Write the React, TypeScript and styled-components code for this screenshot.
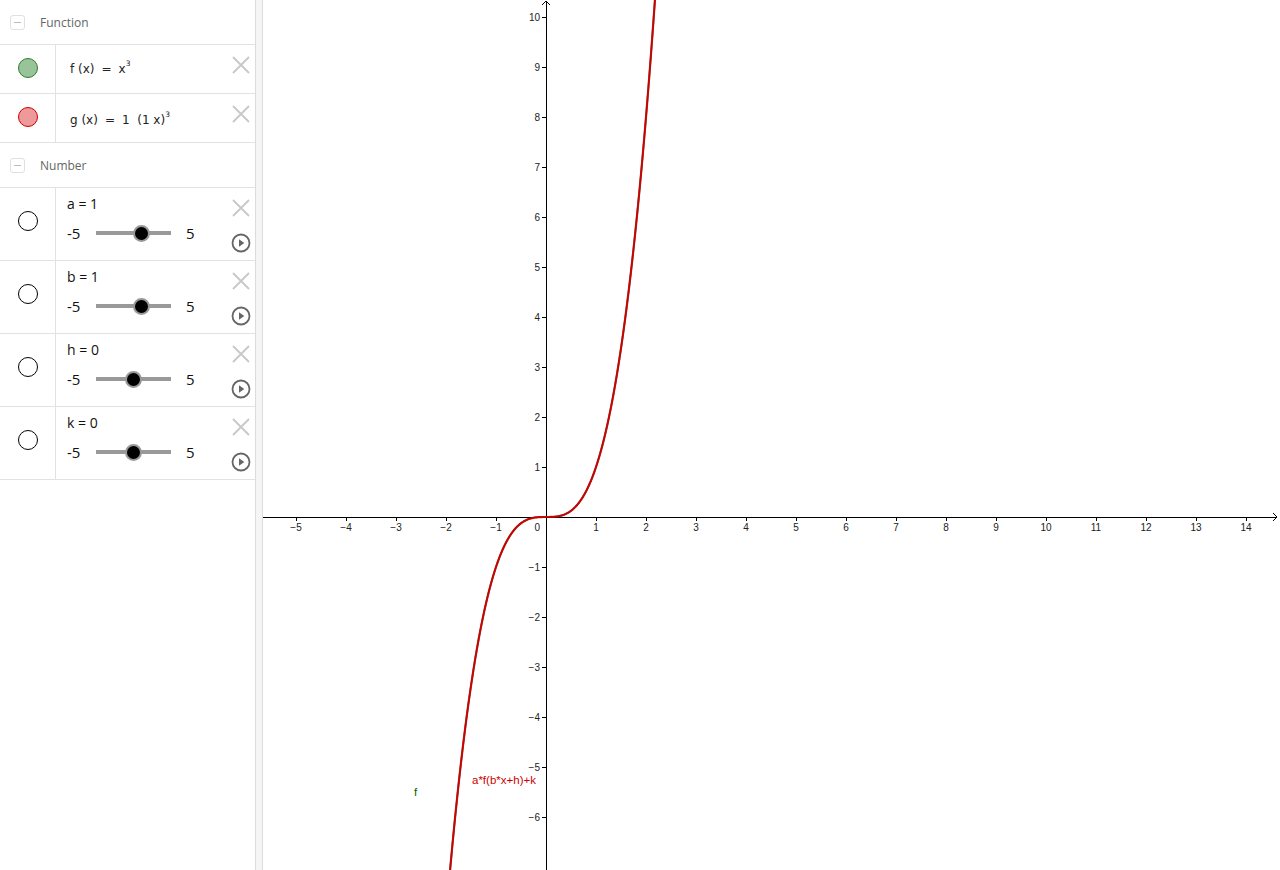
import React from 'react'
import styled, { createGlobalStyle } from 'styled-components'

const GlobalStyle = createGlobalStyle`
  html, body {
    margin: 0;
    padding: 0;
    overflow: hidden;
    background: #fff;
  }
  #root {
    height: 870px;
  }
`

const ORIGIN_X = 283
const ORIGIN_Y = 517
const UNIT = 50
const GRAPH_W = 1017
const GRAPH_H = 870

type Slider = { name: string; value: number }

const sliders: Slider[] = [
  { name: 'a', value: 1 },
  { name: 'b', value: 1 },
  { name: 'h', value: 0 },
  { name: 'k', value: 0 },
]

const Page = styled.div`
  display: flex;
  height: 870px;
  font-family: "Open Sans", "DejaVu Sans", sans-serif;
`

const Sidebar = styled.aside`
  width: 256px;
  flex: none;
  background: #fff;
  border-right: 1px solid #dcdcdc;
  box-sizing: border-box;
`

const Splitter = styled.div`
  width: 6px;
  flex: none;
  background: #f5f5f5;
  border-right: 1px solid #dcdcdc;
`

const GraphArea = styled.main`
  flex: 1;
  overflow: hidden;
`

const SectionHeader = styled.div`
  height: 44px;
  display: flex;
  align-items: center;
  gap: 15px;
  padding-left: 10px;
  border-bottom: 1px solid #e2e2e2;
  color: #666;
  font-size: 12px;
`

const Collapse = styled.span`
  width: 13px;
  height: 13px;
  border: 1px solid #e0e0e0;
  border-radius: 3px;
  display: flex;
  align-items: center;
  justify-content: center;

  &::after {
    content: '';
    width: 7px;
    height: 1px;
    background: #bbb;
  }
`

const Row = styled.div<{ $h: number }>`
  height: ${p => p.$h}px;
  display: flex;
  border-bottom: 1px solid #e2e2e2;
`

const MarkerCell = styled.div<{ $shift?: number }>`
  width: 56px;
  flex: none;
  border-right: 1px solid #e2e2e2;
  display: flex;
  align-items: center;
  justify-content: center;
  padding-bottom: ${p => p.$shift ?? 0}px;
  box-sizing: border-box;
`

const Marker = styled.span<{ $fill: string; $stroke: string }>`
  width: 18px;
  height: 18px;
  border-radius: 50%;
  background: ${p => p.$fill};
  border: 1px solid ${p => p.$stroke};
`

const Content = styled.div`
  flex: 1;
  position: relative;
  padding-left: 11px;
`

const Formula = styled.div<{ $down?: number }>`
  height: 100%;
  display: flex;
  align-items: center;
  padding: ${p => p.$down ?? 0}px 0 0 3px;
  box-sizing: border-box;
  font-family: "DejaVu Sans", sans-serif;
  font-size: 12px;
  color: #222;
  white-space: pre;

  sup {
    font-size: 7.5px;
    position: relative;
    top: -6px;
  }
`

const Op = styled.span`
  margin: 0 7px;
`

const Actions = styled.div`
  position: absolute;
  right: 4px;
  top: 10px;
  display: flex;
  flex-direction: column;
  align-items: center;
  gap: 15px;
`

const SliderLabel = styled.div`
  margin-top: 6px;
  font-size: 14px;
  color: #111;
  height: 19px;
`

const SliderLine = styled.div`
  display: flex;
  align-items: center;
  margin-top: 10px;
  font-size: 15px;
  color: #111;
`

const Bound = styled.span<{ $w: number }>`
  width: ${p => p.$w}px;
`

const Track = styled.div`
  position: relative;
  width: 75px;
  height: 4px;
  background: #999;
  margin-right: 15px;
`

const Knob = styled.span`
  position: absolute;
  top: 50%;
  width: 13px;
  height: 13px;
  margin: -8.5px 0 0 -8.5px;
  border-radius: 50%;
  background: #000;
  border: 2px solid #999;
`

const CloseIcon = () => (
  <svg width="20" height="20" viewBox="0 0 20 20">
    <path d="M2 2 L18 18 M18 2 L2 18" stroke="#c8c8c8" strokeWidth="1.8" fill="none" />
  </svg>
)

const PlayIcon = () => (
  <svg width="20" height="20" viewBox="0 0 20 20">
    <circle cx="10" cy="10" r="8.5" stroke="#666" strokeWidth="1.8" fill="none" />
    <path d="M8 6.3 L13.3 10 L8 13.7 Z" fill="#666" />
  </svg>
)

const Graph = () => {
  const pts: string[] = []
  for (let x = -1.93; x <= 2.2; x += 0.01) {
    const px = ORIGIN_X + x * UNIT
    const py = ORIGIN_Y - x * x * x * UNIT
    pts.push(`${px.toFixed(2)},${py.toFixed(2)}`)
  }
  const d = 'M' + pts.join(' L')
  const xs = Array.from({ length: 20 }, (_, i) => i - 5).filter(v => v !== 0)
  const ys = Array.from({ length: 17 }, (_, i) => i - 6).filter(v => v !== 0)
  const lbl = (v: number) => (v < 0 ? `\u2212${-v}` : `${v}`)

  return (
    <svg width={GRAPH_W} height={GRAPH_H} style={{ display: 'block' }}>
      <g stroke="#000" strokeWidth="1" shapeRendering="crispEdges">
        <line x1={0} y1={ORIGIN_Y} x2={GRAPH_W - 3} y2={ORIGIN_Y} />
        <line x1={ORIGIN_X} y1={1} x2={ORIGIN_X} y2={GRAPH_H} />
        {xs.map(v => (
          <line key={v} x1={ORIGIN_X + v * UNIT} y1={ORIGIN_Y} x2={ORIGIN_X + v * UNIT} y2={ORIGIN_Y + 4} />
        ))}
        {ys.map(v => (
          <line key={v} x1={ORIGIN_X - 4} y1={ORIGIN_Y - v * UNIT} x2={ORIGIN_X} y2={ORIGIN_Y - v * UNIT} />
        ))}
      </g>
      <path d={`M${ORIGIN_X - 4} 5 L${ORIGIN_X} 1 L${ORIGIN_X + 4} 5`} stroke="#000" fill="none" />
      <path d={`M${GRAPH_W - 7} ${ORIGIN_Y - 4} L${GRAPH_W - 3} ${ORIGIN_Y} L${GRAPH_W - 7} ${ORIGIN_Y + 4}`} stroke="#000" fill="none" />
      <g fontFamily="'Liberation Sans', Arial, sans-serif" fontSize="10" fill="#222">
        {xs.map(v => (
          <text key={v} x={ORIGIN_X + v * UNIT} y={ORIGIN_Y + 14} textAnchor="middle">{lbl(v)}</text>
        ))}
        {ys.map(v => (
          <text key={v} x={ORIGIN_X - 6} y={ORIGIN_Y - v * UNIT + 4} textAnchor="end">{lbl(v)}</text>
        ))}
        <text x={ORIGIN_X - 6} y={ORIGIN_Y + 14} textAnchor="end">0</text>
      </g>
      <path d={d} stroke="#6b1a00" strokeWidth="2.2" fill="none" opacity="0.8" />
      <path d={d} stroke="#cc0000" strokeWidth="1.7" fill="none" />
      <g fontFamily="'Liberation Sans', Arial, sans-serif" fontSize="11.5">
        <text x={151} y={796} fill="#006400">f</text>
        <text x={209} y={784} fill="#cc0000">a*f(b*x+h)+k</text>
      </g>
    </svg>
  )
}

export default function App() {
  return (
    <>
      <GlobalStyle />
      <Page>
        <Sidebar>
          <SectionHeader>
            <Collapse />
            Function
          </SectionHeader>
          <Row $h={48}>
            <MarkerCell $shift={2}>
              <Marker $fill="#99c499" $stroke="#2e7d32" />
            </MarkerCell>
            <Content>
              <Formula>f (x)<Op>=</Op>x<sup>3</sup></Formula>
              <Actions>
                <CloseIcon />
              </Actions>
            </Content>
          </Row>
          <Row $h={48}>
            <MarkerCell $shift={2}>
              <Marker $fill="#ee9a9a" $stroke="#cc0000" />
            </MarkerCell>
            <Content>
              <Formula $down={4}>g (x)<Op>=</Op>1  (1 x)<sup>3</sup></Formula>
              <Actions>
                <CloseIcon />
              </Actions>
            </Content>
          </Row>
          <SectionHeader>
            <Collapse />
            Number
          </SectionHeader>
          {sliders.map(s => (
            <Row key={s.name} $h={72}>
              <MarkerCell $shift={6}>
                <Marker $fill="#fff" $stroke="#000" />
              </MarkerCell>
              <Content>
                <SliderLabel>{s.name} = {s.value}</SliderLabel>
                <SliderLine>
                  <Bound $w={29}>-5</Bound>
                  <Track>
                    <Knob style={{ left: `${((s.value + 5) / 10) * 100}%` }} />
                  </Track>
                  <Bound $w={12}>5</Bound>
                </SliderLine>
                <Actions>
                  <CloseIcon />
                  <PlayIcon />
                </Actions>
              </Content>
            </Row>
          ))}
        </Sidebar>
        <Splitter />
        <GraphArea>
          <Graph />
        </GraphArea>
      </Page>
    </>
  )
}
